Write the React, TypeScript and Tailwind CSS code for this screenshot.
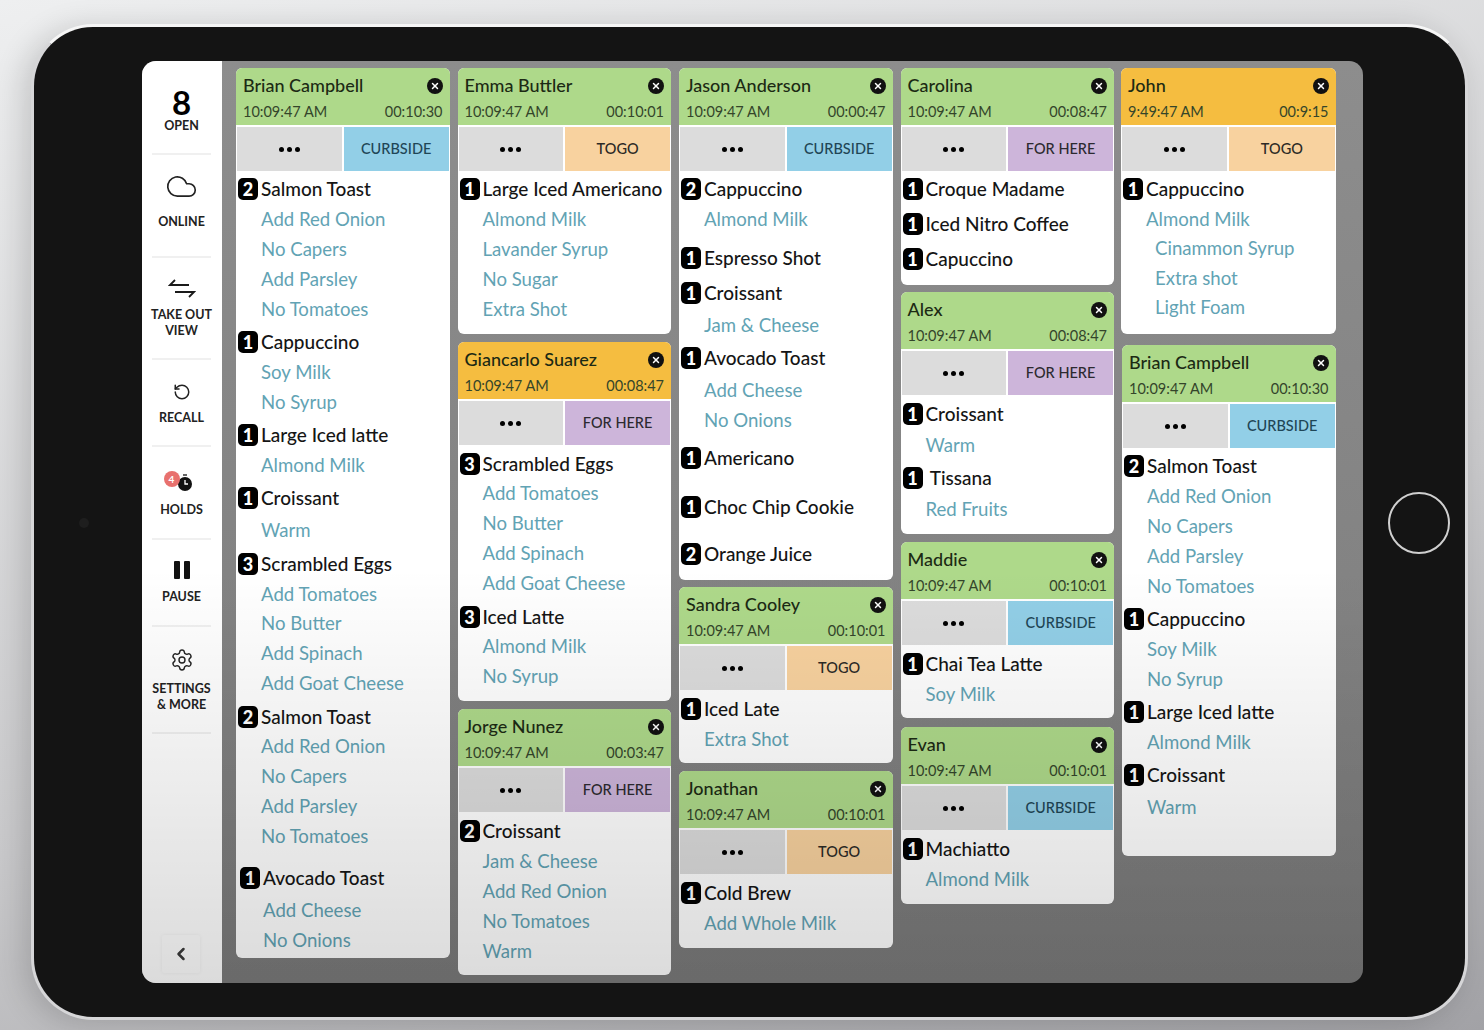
import { Cloud, RotateCcw, Settings, ChevronLeft, X } from "lucide-react";

type Row = [number, string, string?];

type Order = {
  name: string;
  time?: string;
  timer: string;
  kind: "CURBSIDE" | "TOGO" | "FOR HERE";
  late?: boolean;
  box: string;
  rows: Row[];
};

const kindColors = {
  CURBSIDE: "bg-[#92cfe7] text-[#1f4656]",
  TOGO: "bg-[#f8d29f] text-[#2c2a26]",
  "FOR HERE": "bg-[#cdb5da] text-[#2c2a30]",
};

const columns: Order[][] = [
  [
    {
      name: "Brian Campbell",
      timer: "00:10:30",
      kind: "CURBSIDE",
      box: "h-[890px]",
      rows: [
        [2, "Salmon Toast"],
        [0, "Add Red Onion"],
        [0, "No Capers"],
        [0, "Add Parsley"],
        [0, "No Tomatoes"],
        [1, "Cappuccino", "mt-[3px]"],
        [0, "Soy Milk"],
        [0, "No Syrup"],
        [1, "Large Iced latte", "mt-[3px]"],
        [0, "Almond Milk"],
        [1, "Croissant", "mt-[3px]"],
        [0, "Warm", "mt-[2px]"],
        [3, "Scrambled Eggs", "mt-[4px]"],
        [0, "Add Tomatoes"],
        [0, "No Butter", "-mt-px"],
        [0, "Add Spinach"],
        [0, "Add Goat Cheese"],
        [2, "Salmon Toast", "mt-[4px]"],
        [0, "Add Red Onion", "-mt-px"],
        [0, "No Capers"],
        [0, "Add Parsley"],
        [0, "No Tomatoes"],
        [1, "Avocado Toast", "mt-[12px] ml-[2px]"],
        [0, "Add Cheese", "mt-[2px] ml-[2px]"],
        [0, "No Onions", "ml-[2px]"],
      ],
    },
  ],
  [
    {
      name: "Emma Buttler",
      timer: "00:10:01",
      kind: "TOGO",
      box: "h-[266px]",
      rows: [
        [1, "Large Iced Americano"],
        [0, "Almond Milk"],
        [0, "Lavander Syrup"],
        [0, "No Sugar"],
        [0, "Extra Shot"],
      ],
    },
    {
      name: "Giancarlo Suarez",
      timer: "00:08:47",
      kind: "FOR HERE",
      late: true,
      box: "h-[359px] mt-[8px]",
      rows: [
        [3, "Scrambled Eggs", "mt-[1px]"],
        [0, "Add Tomatoes", "-mt-px"],
        [0, "No Butter"],
        [0, "Add Spinach"],
        [0, "Add Goat Cheese"],
        [3, "Iced Latte", "mt-[4px]"],
        [0, "Almond Milk", "-mt-px"],
        [0, "No Syrup"],
      ],
    },
    {
      name: "Jorge Nunez",
      timer: "00:03:47",
      kind: "FOR HERE",
      box: "h-[266px] mt-[8px]",
      rows: [
        [2, "Croissant", "mt-[1px]"],
        [0, "Jam & Cheese"],
        [0, "Add Red Onion"],
        [0, "No Tomatoes"],
        [0, "Warm"],
      ],
    },
  ],
  [
    {
      name: "Jason Anderson",
      timer: "00:00:47",
      kind: "CURBSIDE",
      box: "h-[512px]",
      rows: [
        [2, "Cappuccino"],
        [0, "Almond Milk"],
        [1, "Espresso Shot", "mt-[9px]"],
        [1, "Croissant", "mt-[5px]"],
        [0, "Jam & Cheese", "mt-[2px]"],
        [1, "Avocado Toast", "mt-[3px]"],
        [0, "Add Cheese", "mt-[2px]"],
        [0, "No Onions"],
        [1, "Americano", "mt-[8px]"],
        [1, "Choc Chip Cookie", "mt-[19px]"],
        [2, "Orange Juice", "mt-[17px]"],
      ],
    },
    {
      name: "Sandra Cooley",
      timer: "00:10:01",
      kind: "TOGO",
      box: "h-[176px] mt-[7px]",
      rows: [
        [1, "Iced Late", "mt-[1px]"],
        [0, "Extra Shot"],
      ],
    },
    {
      name: "Jonathan",
      timer: "00:10:01",
      kind: "TOGO",
      box: "h-[177px] mt-[8px]",
      rows: [
        [1, "Cold Brew", "mt-[1px]"],
        [0, "Add Whole Milk"],
      ],
    },
  ],
  [
    {
      name: "Carolina",
      timer: "00:08:47",
      kind: "FOR HERE",
      box: "h-[217px]",
      rows: [
        [1, "Croque Madame"],
        [1, "Iced Nitro Coffee", "mt-[5px]"],
        [1, "Capuccino", "mt-[5px]"],
      ],
    },
    {
      name: "Alex",
      timer: "00:08:47",
      kind: "FOR HERE",
      box: "h-[242px] mt-[7px]",
      rows: [
        [1, "Croissant", "mt-[1px]"],
        [0, "Warm", "mt-px"],
        [1, "\u00a0Tissana", "mt-[3px]"],
        [0, "Red Fruits", "mt-px"],
      ],
    },
    {
      name: "Maddie",
      timer: "00:10:01",
      kind: "CURBSIDE",
      box: "h-[176px] mt-[8px]",
      rows: [
        [1, "Chai Tea Latte", "mt-[1px]"],
        [0, "Soy Milk"],
      ],
    },
    {
      name: "Evan",
      timer: "00:10:01",
      kind: "CURBSIDE",
      box: "h-[177px] mt-[9px]",
      rows: [
        [1, "Machiatto", "mt-[1px]"],
        [0, "Almond Milk"],
      ],
    },
  ],
  [
    {
      name: "John",
      time: "9:49:47 AM",
      timer: "00:9:15",
      kind: "TOGO",
      late: true,
      box: "h-[266px] -ml-px",
      rows: [
        [1, "Cappuccino"],
        [0, "Almond Milk"],
        [0, "Cinammon Syrup", "-mt-px ml-[9px]"],
        [0, "Extra shot", "ml-[9px]"],
        [0, "Light Foam", "-mt-px ml-[9px]"],
      ],
    },
    {
      name: "Brian Campbell",
      timer: "00:10:30",
      kind: "CURBSIDE",
      box: "h-[511px] mt-[11px]",
      rows: [
        [2, "Salmon Toast"],
        [0, "Add Red Onion"],
        [0, "No Capers"],
        [0, "Add Parsley"],
        [0, "No Tomatoes"],
        [1, "Cappuccino", "mt-[3px]"],
        [0, "Soy Milk"],
        [0, "No Syrup"],
        [1, "Large Iced latte", "mt-[3px]"],
        [0, "Almond Milk"],
        [1, "Croissant", "mt-[3px]"],
        [0, "Warm", "mt-[2px]"],
      ],
    },
  ],
];

function OrderCard({ order }: { order: Order }) {
  return (
    <div className={`flex flex-col overflow-hidden rounded-[6px] bg-white ${order.box}`}>
      <div className={`h-[57px] shrink-0 px-[7px] pt-[5px] ${order.late ? "bg-[#f5bd40]" : "bg-[#aed98a]"}`}>
        <div className="flex h-[25px] items-center justify-between">
          <span className="-mt-px text-[18px] font-medium leading-none text-[#1c2a14]">{order.name}</span>
          <span className="flex size-[16px] items-center justify-center rounded-full bg-[#111] text-white">
            <X size={10} strokeWidth={3.5} />
          </span>
        </div>
        <div className="mt-[4px] flex items-center justify-between text-[14.5px] leading-[20px] text-[#34452a]">
          <span>{order.time ?? "10:09:47 AM"}</span>
          <span>{order.timer}</span>
        </div>
      </div>
      <div className="mt-[2px] flex h-[44px] shrink-0 gap-[2px] px-px">
        <div className="flex flex-1 items-center justify-center bg-[#dcdcdc]">
          <span className="flex gap-[3px]">
            <i className="size-[5px] rounded-full bg-black" />
            <i className="size-[5px] rounded-full bg-black" />
            <i className="size-[5px] rounded-full bg-black" />
          </span>
        </div>
        <div className={`flex flex-1 items-center justify-center text-[14.5px] font-medium ${kindColors[order.kind]}`}>
          {order.kind}
        </div>
      </div>
      <div className="flex flex-col pl-[2px] pt-[3px]">
        {order.rows.map(([qty, text, extra], i) =>
          qty ? (
            <div key={i} className={`flex h-[30px] items-center gap-[3px] whitespace-nowrap text-[19px] font-medium text-[#151515] ${extra ?? ""}`}>
              <span className="flex h-[22px] w-[20px] shrink-0 items-center justify-center rounded-[5px] bg-black text-[18px] font-black leading-none text-white">
                {qty}
              </span>
              {text}
            </div>
          ) : (
            <div key={i} className={`flex h-[30px] items-center whitespace-nowrap pl-[23px] pt-[2px] text-[18.6px] text-[#62a3b4] ${extra ?? ""}`}>
              {text}
            </div>
          ),
        )}
      </div>
    </div>
  );
}

function NavItem({ box, label, children }: { box: string; label: React.ReactNode; children: React.ReactNode }) {
  return (
    <div className={`ml-[10px] mr-[11px] flex shrink-0 flex-col items-center border-b-2 border-[#f0f0f0] ${box}`}>
      {children}
      <div className="whitespace-nowrap text-center text-[12.5px] font-bold leading-[15.5px] text-[#222]">{label}</div>
    </div>
  );
}

export default function App() {
  return (
    <div className="h-[1030px] w-[1484px] overflow-hidden bg-[linear-gradient(165deg,#eeeff0,#c9c9cb_60%,#a2a2a6)] pl-[31px] pt-[24px] font-['Lato',sans-serif]">
      <div className="relative h-[996px] w-[1437px] rounded-[62px] border-[3px] border-[#d6d6d8] border-t-[#f6f6f6] bg-[#141414] pl-[108px] pt-[34px] shadow-[-8px_4px_30px_rgba(0,0,0,0.16)]">
        {/* screen */}
        <div className="relative flex h-[922px] w-[1221px] overflow-hidden rounded-[14px] bg-[linear-gradient(180deg,#8d8d8d,#7b7b7b)]">
          {/* sidebar */}
          <aside className="relative flex w-[80px] shrink-0 flex-col bg-white">
            <NavItem box="h-[94px] pt-[25px]" label="OPEN">
              <div className="text-[33px] font-bold leading-[32px] text-black">8</div>
            </NavItem>
            <NavItem box="h-[103px] pt-[15px]" label="ONLINE">
              <Cloud size={33} strokeWidth={1.2} className="text-[#222]" />
              <div className="h-[11px]" />
            </NavItem>
            <NavItem box="h-[102px] pt-[20px]" label={<>TAKE OUT<br />VIEW</>}>
              <svg width="28" height="22" viewBox="0 0 28 22" fill="none" stroke="#1a1a1a" strokeWidth="1.8" className="mb-[7px]">
                <path d="M7 2 2 7h19" />
                <path d="M21 19l5-5H7" />
              </svg>
            </NavItem>
            <NavItem box="h-[87px] pt-[23px]" label="RECALL">
              <RotateCcw size={18} strokeWidth={2} className="mb-[9px] text-[#222]" />
            </NavItem>
            <NavItem box="h-[93px] pt-[24px]" label="HOLDS">
              <div className="relative mb-[7px] h-[24px] w-[32px]">
                <svg width="16" height="18" viewBox="0 0 16 18" className="absolute left-[11px] top-[3px]">
                  <circle cx="8" cy="10" r="7" fill="#111" />
                  <rect x="6" y="0" width="4" height="2" fill="#666" />
                  <path d="M8 6v4h3" stroke="#fff" strokeWidth="1.3" fill="none" />
                </svg>
                <span className="absolute -left-[2px] top-0 flex size-[16px] items-center justify-center rounded-full bg-[#e8716e] text-[10px] font-bold text-white">
                  4
                </span>
              </div>
            </NavItem>
            <NavItem box="h-[87px] pt-[21px]" label="PAUSE">
              <div className="mb-[10px] flex h-[18px] gap-[4px]">
                <span className="w-[6px] rounded-[1px] bg-[#111]" />
                <span className="w-[6px] rounded-[1px] bg-[#111]" />
              </div>
            </NavItem>
            <NavItem box="h-[107px] pt-[21px]" label={<>SETTINGS<br />&amp; MORE</>}>
              <Settings size={24} strokeWidth={1.4} className="mb-[9px] text-[#222]" />
            </NavItem>
            <button className="absolute bottom-[10px] left-[20px] flex size-[38px] items-center justify-center rounded-[2px] bg-white text-[#3a3a3a] shadow-[0_0_4px_rgba(0,0,0,0.06)]">
              <ChevronLeft size={20} strokeWidth={3} />
            </button>
          </aside>

          {/* tickets */}
          <main className="flex gap-2 pl-[14px] pt-[7px]">
            {columns.map((col, i) => (
              <div key={i} className="flex w-[213.5px] flex-col">
                {col.map((order) => (
                  <OrderCard key={order.name + order.box} order={order} />
                ))}
              </div>
            ))}
          </main>

          {/* screen glare fading toward the bottom */}
          <div className="pointer-events-none absolute inset-0 bg-[linear-gradient(180deg,rgba(0,0,0,0)_55%,rgba(0,0,0,0.14)_100%)]" />
        </div>

        {/* camera + home button */}
        <div className="absolute left-[45px] top-[491px] size-[10px] rounded-full bg-[#1e1e1e]" />
        <div className="absolute left-[1354px] top-[465px] size-[62px] rounded-full border-[2px] border-[#d0d0d0]" />
      </div>
    </div>
  );
}
